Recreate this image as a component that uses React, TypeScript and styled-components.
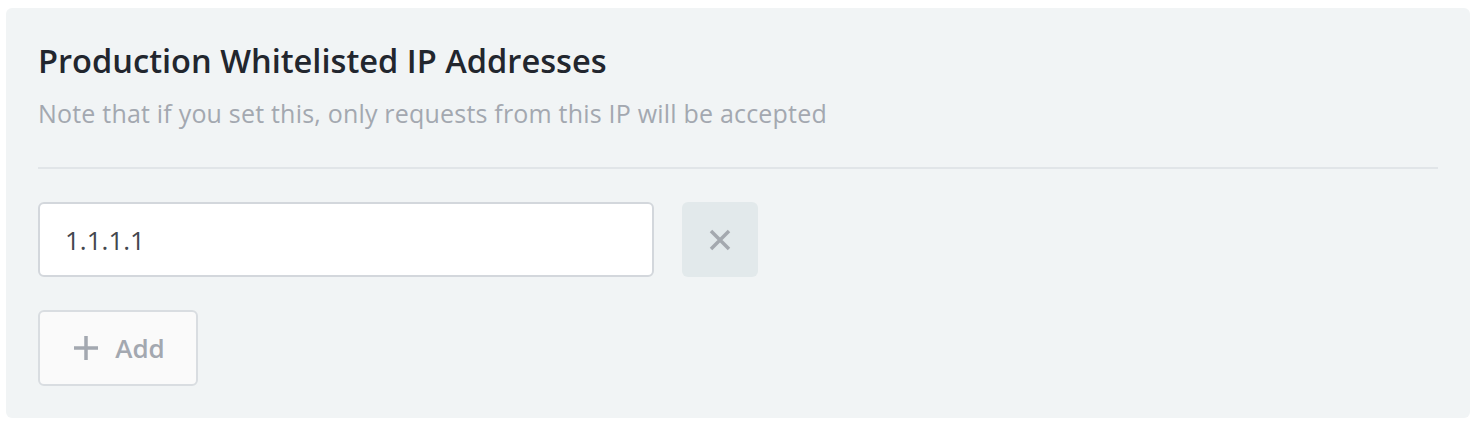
import { FC, useState } from "react";
import styled, { createGlobalStyle } from "styled-components";

const GlobalStyle = createGlobalStyle`
  body {
    margin: 0;
    background: #fff;
    font-family: "Open Sans", "Noto Sans", sans-serif;
  }
`;

const Page = styled.div`
  padding: 8px 14px 7px 6px;
`;

const Panel = styled.section`
  background-color: #f1f4f5;
  border-radius: 6px;
  padding: 33px 32px 32px 32px;
`;

const Title = styled.h2`
  margin: 0;
  font-size: 32.6px;
  line-height: 40px;
  font-weight: 600;
  color: #22262e;
`;

const Note = styled.p`
  margin: 16px 0 0 0;
  font-size: 25px;
  line-height: 32px;
  letter-spacing: 0.2px;
  color: #a3a8b0;
`;

const Divider = styled.hr`
  border: none;
  border-top: 2px solid #e1e5e8;
  margin: 38px 0 33px 0;
`;

const Row = styled.div`
  display: flex;
  align-items: center;
  gap: 28px;
`;

const Input = styled.input`
  box-sizing: border-box;
  width: 616px;
  height: 75px;
  border: 2px solid #d3d7dc;
  border-radius: 6px;
  background: #fff;
  padding: 0 25px;
  font-family: inherit;
  font-size: 26px;
  color: #43474e;
  outline: none;
`;

const RemoveButton = styled.button`
  width: 76px;
  height: 75px;
  border: none;
  border-radius: 6px;
  background: #e2e9eb;
  display: flex;
  align-items: center;
  justify-content: center;
  cursor: pointer;
`;

const AddButton = styled.button`
  margin-top: 33px;
  box-sizing: border-box;
  width: 160px;
  height: 76px;
  border: 2px solid #d9dde1;
  border-radius: 6px;
  background: #fafafa;
  display: flex;
  align-items: center;
  justify-content: center;
  gap: 16px;
  padding: 0 0 0 2px;
  font-family: inherit;
  font-size: 26px;
  font-weight: 600;
  color: #a3a8b0;
  cursor: pointer;
`;

const App: FC = () => {
  const [ips, setIps] = useState<string[]>(["1.1.1.1"]);

  return (
    <>
      <GlobalStyle />
      <Page>
        <Panel>
          <Title>Production Whitelisted IP Addresses</Title>
          <Note>Note that if you set this, only requests from this IP will be accepted</Note>
          <Divider />
          {ips.map((ip, i) => (
            <Row key={i}>
              <Input
                value={ip}
                onChange={(e) =>
                  setIps(ips.map((v, j) => (j === i ? e.target.value : v)))
                }
              />
              <RemoveButton onClick={() => setIps(ips.filter((_, j) => j !== i))}>
                <svg width="22" height="22" viewBox="0 0 22 22">
                  <path d="M2 2 L20 20 M20 2 L2 20" stroke="#a4a9af" strokeWidth="3.5" />
                </svg>
              </RemoveButton>
            </Row>
          ))}
          <AddButton onClick={() => setIps([...ips, ""])}>
            <svg width="26" height="26" viewBox="0 0 26 26">
              <path d="M13 1 V25 M1 13 H25" stroke="#a3a8b0" strokeWidth="3.5" />
            </svg>
            Add
          </AddButton>
        </Panel>
      </Page>
    </>
  );
};

export default App;
